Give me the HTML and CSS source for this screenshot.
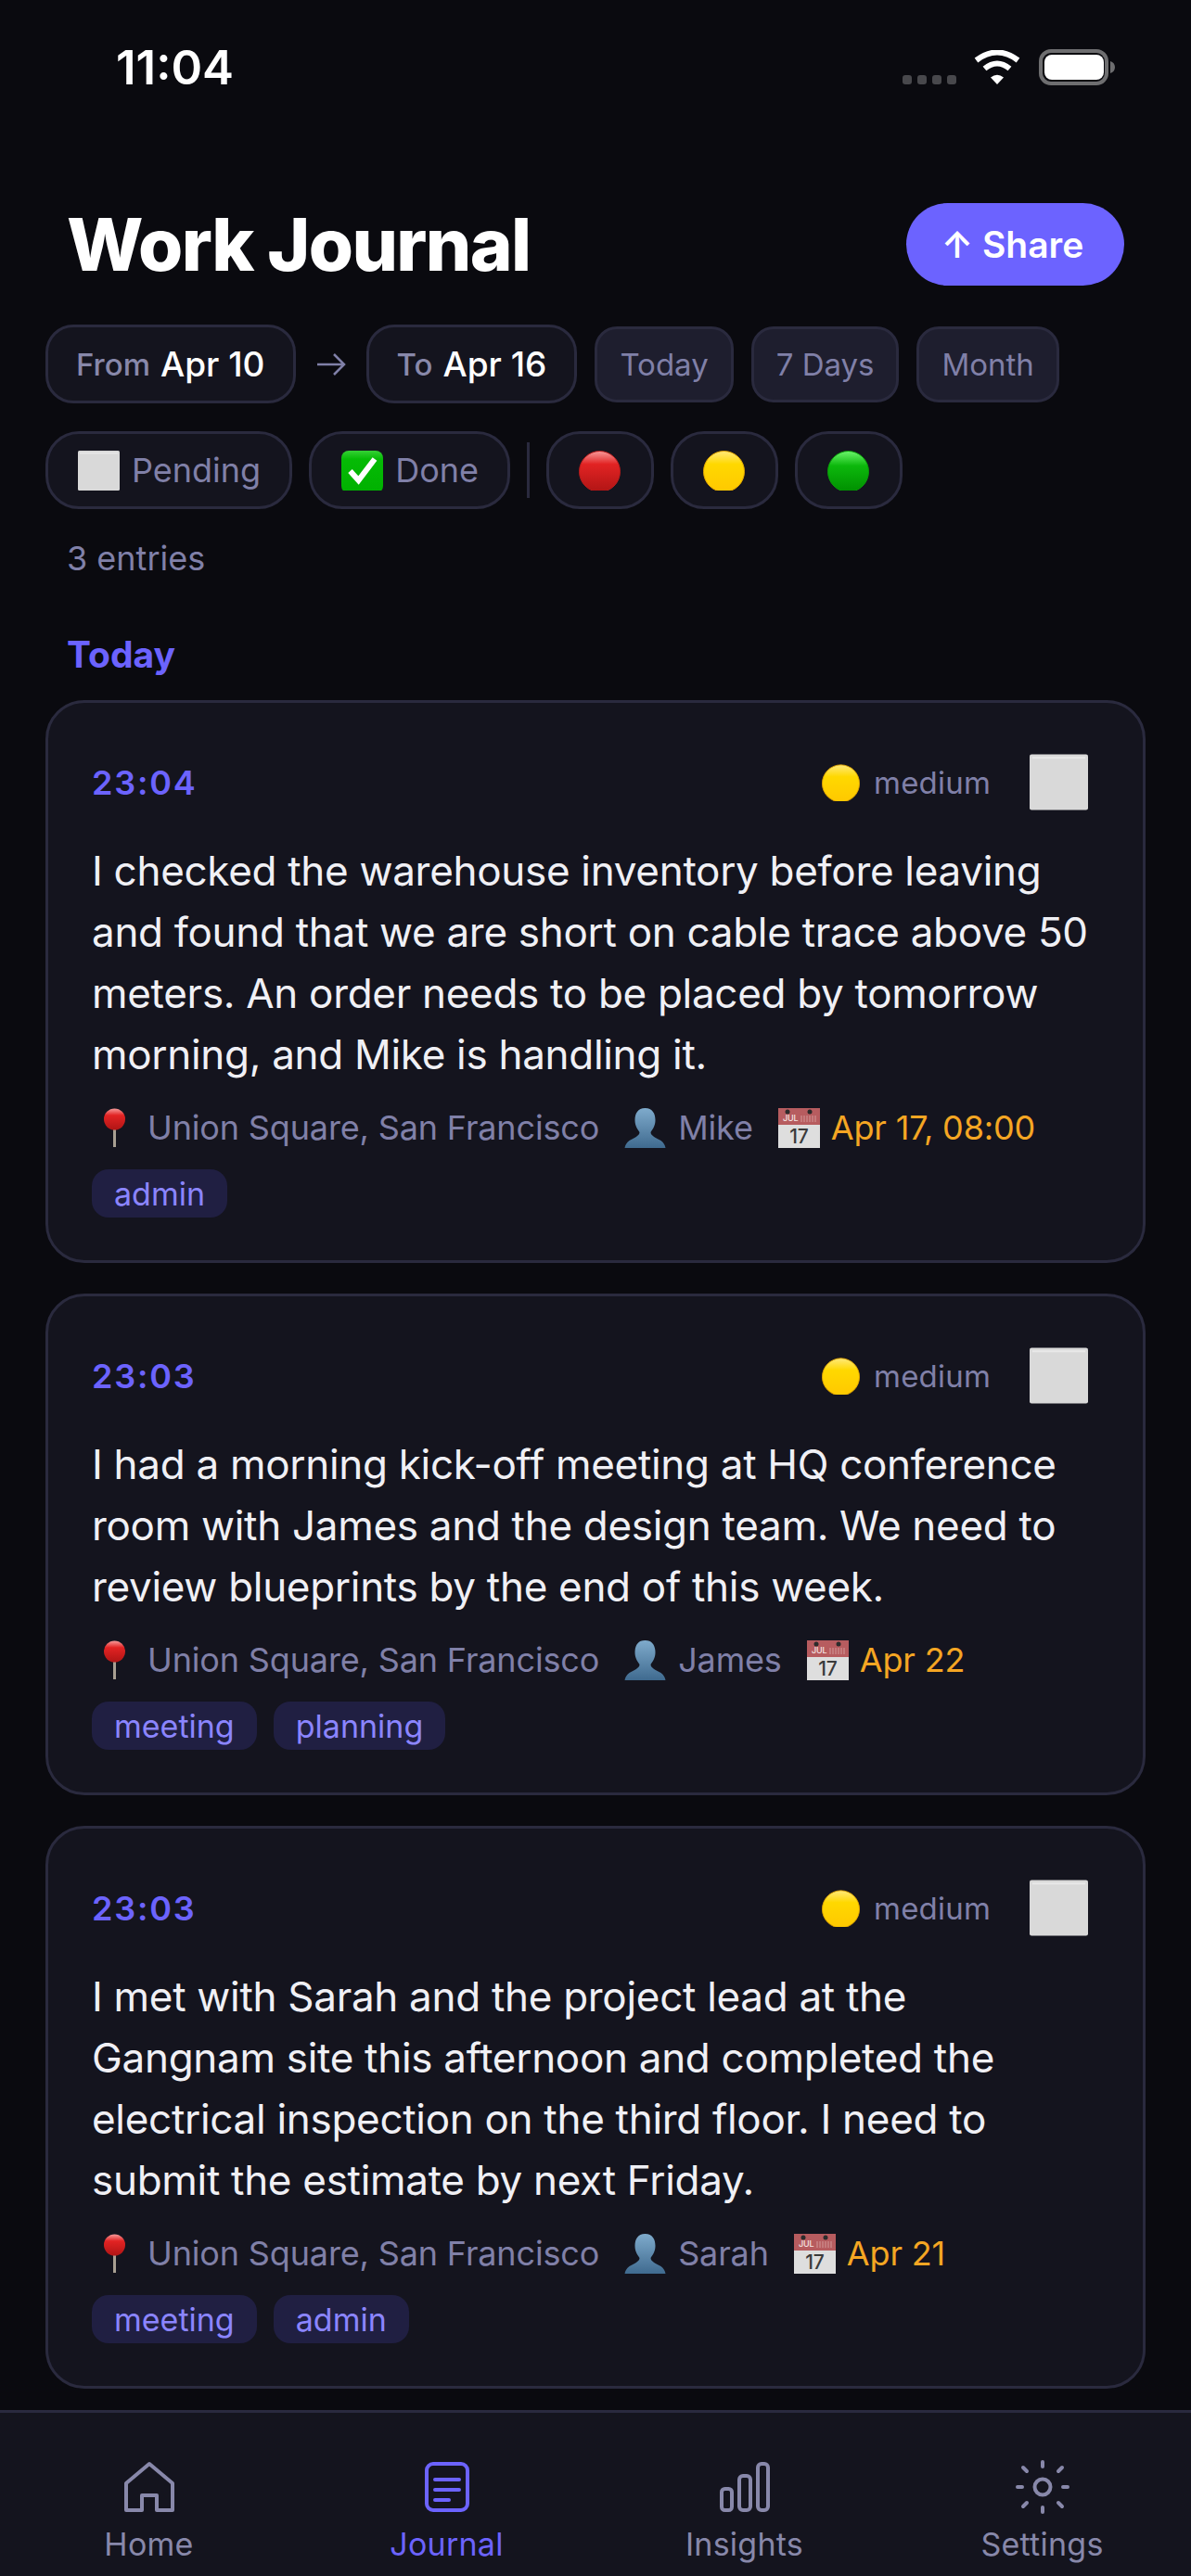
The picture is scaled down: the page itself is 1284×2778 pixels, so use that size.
FILE: index.html
```html
<!DOCTYPE html>
<html lang="en">
<head>
    <meta charset="UTF-8">
    <meta name="viewport" content="width=device-width, initial-scale=1.0">
    <title>Work Journal</title>
    <link rel="stylesheet" href="styles.css">
</head>
<body>

    <!-- emoji drawn once, reused below -->
    <svg class="sprite" aria-hidden="true">
        <defs>
            <linearGradient id="red-ball" x1="0" y1="0" x2="0" y2="1">
                <stop offset="0" stop-color="#f79a9a"/>
                <stop offset="0.32" stop-color="#e22323"/>
                <stop offset="1" stop-color="#b01515"/>
            </linearGradient>
            <linearGradient id="yellow-ball" x1="0" y1="0" x2="0" y2="1">
                <stop offset="0" stop-color="#ffe97a"/>
                <stop offset="0.32" stop-color="#ffd800"/>
                <stop offset="1" stop-color="#ffc800"/>
            </linearGradient>
            <linearGradient id="green-ball" x1="0" y1="0" x2="0" y2="1">
                <stop offset="0" stop-color="#6cf56c"/>
                <stop offset="0.36" stop-color="#0cb80c"/>
                <stop offset="1" stop-color="#008f00"/>
            </linearGradient>
            <linearGradient id="person-fill" x1="0" y1="0" x2="0" y2="1">
                <stop offset="0" stop-color="#7fabcc"/>
                <stop offset="1" stop-color="#3f6a8f"/>
            </linearGradient>
            <linearGradient id="check-fill" x1="0" y1="0" x2="0" y2="1">
                <stop offset="0" stop-color="#35d035"/>
                <stop offset="0.2" stop-color="#05bb05"/>
                <stop offset="1" stop-color="#00b000"/>
            </linearGradient>
        </defs>
        <symbol id="e-red" viewBox="0 0 45 43">
            <circle cx="22.5" cy="22.5" r="22" fill="url(#red-ball)" stroke="#b81c1c"/>
        </symbol>
        <symbol id="e-yellow" viewBox="0 0 45 43">
            <circle cx="22.5" cy="22.5" r="22" fill="url(#yellow-ball)" stroke="#e0a400"/>
        </symbol>
        <symbol id="e-green" viewBox="0 0 45 43">
            <circle cx="22.5" cy="22.5" r="22" fill="url(#green-ball)" stroke="#0a9a0a"/>
        </symbol>
        <symbol id="e-square" viewBox="0 0 45 43">
            <rect width="45" height="43" rx="1.5" fill="#d9d9d9"/>
            <rect x="2" y="2" width="41" height="1.5" fill="#e8e8e8"/>
        </symbol>
        <symbol id="e-check" viewBox="0 0 45 43">
            <rect width="45" height="46" rx="8" fill="url(#check-fill)"/>
            <path d="M9.5 22 L18.5 32 L36 9" fill="none" stroke="#fff" stroke-width="6"/>
        </symbol>
        <symbol id="e-pin" viewBox="0 0 47 43">
            <rect x="23" y="18" width="3" height="24" fill="#a89f92"/>
            <circle cx="24.5" cy="12" r="11.5" fill="url(#red-ball)"/>
        </symbol>
        <symbol id="e-person" viewBox="0 0 45 43">
            <path d="M22.5 0 C30.5 0 33.5 6 33.5 13 C33.5 19 30.5 23 28.5 26 C28.5 30 34.5 32 39.5 35 C42.5 37 44 40 44.5 43 H.5 C1 40 2.5 37 5.5 35 C10.5 32 16.5 30 16.5 26 C14.5 23 11.5 19 11.5 13 C11.5 6 14.5 0 22.5 0 Z" fill="url(#person-fill)"/>
        </symbol>
        <symbol id="e-calendar" viewBox="0 0 45 43">
            <rect width="45" height="43" fill="#dedede"/>
            <rect width="45" height="18" fill="#b75c5f"/>
            <path d="M25 8 V15 M28 8 V15 M31 8 V15 M34 8 V15 M37 8 V15 M40 8 V15" stroke="#cf8f90" stroke-width="1.2"/>
            <circle cx="10" cy="4" r="2.5" fill="#2b2b2b"/>
            <circle cx="34" cy="4" r="2.5" fill="#2b2b2b"/>
        </symbol>
    </svg>

    <div class="app">
        <div class="status-bar">
            <span class="status-time">11:04</span>
            <div class="status-icons">
                <div class="signal"><i></i><i></i><i></i><i></i></div>
                <svg class="wifi" width="50" height="37" viewBox="0 0 50 37">
                    <path d="M25 37 L18 29.5 Q25 24 32 29.5 Z" fill="#fff"/>
                    <path d="M11.5 20 Q25 9 38.5 20" fill="none" stroke="#fff" stroke-width="6"/>
                    <path d="M2.5 11 Q25 -6 47.5 11" fill="none" stroke="#fff" stroke-width="6"/>
                </svg>
                <svg class="battery" width="82" height="39" viewBox="0 0 82 39">
                    <rect x="2" y="2" width="71" height="35" rx="11" fill="none" stroke="#6e6e70" stroke-width="4"/>
                    <rect x="6" y="6" width="64" height="27" rx="8" fill="#fff"/>
                    <path d="M77 13 C80 14 82 16 82 19.5 C82 23 80 25 77 26 Z" fill="#6e6e70"/>
                </svg>
            </div>
        </div>

        <main class="main">
            <header class="page-header">
                <h1>Work Journal</h1>
                <button class="share-btn">↑ Share</button>
            </header>

            <div class="filter-row range-row">
                <div class="date-pill">From <strong>Apr 10</strong></div>
                <svg class="range-arrow" width="32" height="26" viewBox="0 0 32 26">
                    <path d="M1 13 H30 M19 2 L30 13 L19 24" fill="none" stroke="#8080a8" stroke-width="2.5"/>
                </svg>
                <div class="date-pill">To <strong>Apr 16</strong></div>
                <div class="quick-pill">Today</div>
                <div class="quick-pill">7 Days</div>
                <div class="quick-pill">Month</div>
            </div>

            <div class="filter-row status-row">
                <div class="filter-pill"><svg class="emoji"><use href="#e-square"/></svg>Pending</div>
                <div class="filter-pill"><svg class="emoji"><use href="#e-check"/></svg>Done</div>
                <span class="filter-divider"></span>
                <div class="filter-pill"><svg class="emoji"><use href="#e-red"/></svg></div>
                <div class="filter-pill"><svg class="emoji"><use href="#e-yellow"/></svg></div>
                <div class="filter-pill"><svg class="emoji"><use href="#e-green"/></svg></div>
            </div>

            <p class="entry-count">3 entries</p>
            <h2 class="day-label">Today</h2>

            <article class="card">
                <div class="card-head">
                    <span class="card-time">23:04</span>
                    <div class="card-priority"><svg class="emoji-sm"><use href="#e-yellow"/></svg>medium</div>
                    <svg class="card-check"><use href="#e-square"/></svg>
                </div>
                <p class="card-text">I checked the warehouse inventory before leaving and found that we are short on cable trace above 50 meters. An order needs to be placed by tomorrow morning, and Mike is handling it.</p>
                <div class="card-meta">
                    <span class="meta-item"><svg class="emoji-pin"><use href="#e-pin"/></svg>Union Square, San Francisco</span>
                    <span class="meta-item"><svg class="emoji-meta"><use href="#e-person"/></svg>Mike</span>
                    <span class="meta-item due">
                        <svg class="emoji-meta" viewBox="0 0 45 43"><use href="#e-calendar" width="45" height="43"/><text x="5" y="14" class="cal-month">JUL</text><text x="22.5" y="38" class="cal-day">17</text></svg>
                        Apr 17, 08:00
                    </span>
                </div>
                <div class="card-tags"><span class="tag">admin</span></div>
            </article>

            <article class="card">
                <div class="card-head">
                    <span class="card-time">23:03</span>
                    <div class="card-priority"><svg class="emoji-sm"><use href="#e-yellow"/></svg>medium</div>
                    <svg class="card-check"><use href="#e-square"/></svg>
                </div>
                <p class="card-text">I had a morning kick-off meeting at HQ conference room with James and the design team. We need to review blueprints by the end of this week.</p>
                <div class="card-meta">
                    <span class="meta-item"><svg class="emoji-pin"><use href="#e-pin"/></svg>Union Square, San Francisco</span>
                    <span class="meta-item"><svg class="emoji-meta"><use href="#e-person"/></svg>James</span>
                    <span class="meta-item due">
                        <svg class="emoji-meta" viewBox="0 0 45 43"><use href="#e-calendar" width="45" height="43"/><text x="5" y="14" class="cal-month">JUL</text><text x="22.5" y="38" class="cal-day">17</text></svg>
                        Apr 22
                    </span>
                </div>
                <div class="card-tags"><span class="tag">meeting</span><span class="tag">planning</span></div>
            </article>

            <article class="card">
                <div class="card-head">
                    <span class="card-time">23:03</span>
                    <div class="card-priority"><svg class="emoji-sm"><use href="#e-yellow"/></svg>medium</div>
                    <svg class="card-check"><use href="#e-square"/></svg>
                </div>
                <p class="card-text">I met with Sarah and the project lead at the Gangnam site this afternoon and completed the electrical inspection on the third floor. I need to submit the estimate by next Friday.</p>
                <div class="card-meta">
                    <span class="meta-item"><svg class="emoji-pin"><use href="#e-pin"/></svg>Union Square, San Francisco</span>
                    <span class="meta-item"><svg class="emoji-meta"><use href="#e-person"/></svg>Sarah</span>
                    <span class="meta-item due">
                        <svg class="emoji-meta" viewBox="0 0 45 43"><use href="#e-calendar" width="45" height="43"/><text x="5" y="14" class="cal-month">JUL</text><text x="22.5" y="38" class="cal-day">17</text></svg>
                        Apr 21
                    </span>
                </div>
                <div class="card-tags"><span class="tag">meeting</span><span class="tag">admin</span></div>
            </article>
        </main>

        <nav class="tab-bar">
            <div class="tab">
                <svg class="tab-icon" viewBox="0 0 72 72">
                    <path d="M36 11 L61 32 V61 H44 V45 H28 V61 H11 V32 Z"/>
                </svg>
                <span>Home</span>
            </div>
            <div class="tab active">
                <svg class="tab-icon" viewBox="0 0 72 72">
                    <rect x="14" y="11" width="44" height="50" rx="7"/>
                    <path d="M23 28 H49 M23 39 H49 M23 50 H38"/>
                </svg>
                <span>Journal</span>
            </div>
            <div class="tab">
                <svg class="tab-icon" viewBox="0 0 72 72">
                    <rect x="11" y="38" width="11" height="23" rx="3.5"/>
                    <rect x="30" y="24" width="12" height="37" rx="4"/>
                    <rect x="50" y="11" width="11" height="50" rx="4"/>
                </svg>
                <span>Insights</span>
            </div>
            <div class="tab">
                <svg class="tab-icon" viewBox="0 0 72 72">
                    <circle cx="36" cy="36" r="8.5"/>
                    <path d="M36 9 V14 M36 58 V63 M9 36 H14 M58 36 H63 M15 15 L19 19 M53 53 L57 57 M57 15 L53 19 M19 53 L15 57"/>
                </svg>
                <span>Settings</span>
            </div>
        </nav>
    </div>

</body>
</html>
```

FILE: styles.css
```css
* {
    box-sizing: border-box;
}

body {
    font-family: 'Inter', sans-serif;
    margin: 0;
    background-color: #0a0a0f;
    color: #f0f0f5;
}

.sprite {
    position: absolute;
    width: 0;
    height: 0;
}

.cal-month {
    font-family: 'Inter', sans-serif;
    font-size: 9px;
    font-weight: 500;
    fill: #f5e6e6;
}

.cal-day {
    font-family: 'Inter', sans-serif;
    font-size: 21px;
    font-weight: 500;
    fill: #3a3a3a;
    text-anchor: middle;
}

.app {
    width: 1284px;
    height: 2778px;
    display: flex;
    flex-direction: column;
    overflow: hidden;
}

/* status bar */
.status-bar {
    height: 125px;
    padding: 43px 82px 0 125px;
    display: flex;
    justify-content: space-between;
    align-items: flex-start;
}

.status-time {
    font-size: 51px;
    line-height: 60px;
    font-weight: 600;
    color: #fff;
}

.status-icons {
    display: flex;
    align-items: flex-start;
    margin-top: 10px;
}

.signal {
    display: flex;
    gap: 6px;
    margin-top: 28px;
    margin-right: 19px;
}

.signal i {
    width: 10px;
    height: 10px;
    border-radius: 3px;
    background-color: #48484c;
}

.wifi {
    margin-top: 1px;
    margin-right: 20px;
}

/* header and filters */
.main {
    flex: 1;
    padding: 0 49px;
}

.page-header {
    display: flex;
    justify-content: space-between;
    align-items: center;
    padding: 94px 23px 0 23px;
}

.page-header h1 {
    margin: 0;
    font-size: 78px;
    line-height: 89px;
    font-weight: 800;
    letter-spacing: -1.6px;
    color: #fff;
}

.share-btn {
    height: 89px;
    width: 235px;
    padding: 0 6px 0 0;
    border: none;
    border-radius: 45px;
    background-color: #6c63ff;
    color: white;
    font-family: inherit;
    font-size: 39px;
    font-weight: 600;
}

.filter-row {
    display: flex;
    align-items: center;
}

.range-row {
    gap: 19px;
    margin-top: 42px;
}

.status-row {
    gap: 18px;
    margin-top: 30px;
}

.date-pill {
    height: 85px;
    padding: 0 30px;
    display: flex;
    align-items: center;
    gap: 11px;
    border: 3px solid #2a2a3e;
    border-radius: 30px;
    background-color: #14141e;
    color: #8888aa;
    font-size: 33px;
    font-weight: 500;
}

.date-pill strong {
    color: #fff;
    font-size: 37px;
    font-weight: 500;
}

.range-arrow {
    margin: 0 3px;
}

.quick-pill {
    height: 82px;
    padding: 0 24px;
    display: flex;
    align-items: center;
    border: 3px solid #2a2a3e;
    border-radius: 24px;
    background-color: #1e1e2e;
    color: #8080a8;
    font-size: 33px;
}

.filter-pill {
    height: 84px;
    min-width: 116px;
    padding: 0 31px 0 32px;
    display: flex;
    align-items: center;
    gap: 13px;
    border: 3px solid #2a2a3e;
    border-radius: 36px;
    background-color: #14141e;
    color: #8080a8;
    font-size: 36px;
}

.filter-divider {
    width: 3px;
    height: 60px;
    background-color: #2a2a3e;
}

.emoji {
    width: 45px;
    height: 43px;
}

.entry-count {
    margin: 31px 0 0 23px;
    font-size: 36px;
    line-height: 44px;
    color: #8080a8;
}

.day-label {
    margin: 58px 0 0 23px;
    font-size: 39px;
    line-height: 48px;
    font-weight: 700;
    color: #6c63ff;
}

/* entries */
.card {
    margin-top: 25px;
    padding: 54px 48px 46px 47px;
    border: 3px solid #2a2a3e;
    border-radius: 42px;
    background-color: #14141e;
}

.card + .card {
    margin-top: 33px;
}

.card-head {
    display: flex;
    align-items: center;
}

.card-time {
    flex: 1;
    font-size: 36px;
    font-weight: 600;
    letter-spacing: 1.8px;
    color: #6c63ff;
}

.card-priority {
    display: flex;
    align-items: center;
    gap: 15px;
    font-size: 33px;
    letter-spacing: 0.2px;
    color: #8080a8;
}

.emoji-sm {
    width: 41px;
    height: 40px;
}

.card-check {
    width: 63px;
    height: 63px;
    margin: 0 11px 0 42px;
}

.card-text {
    margin: 31px 8px 0 0;
    font-size: 44px;
    line-height: 66px;
    letter-spacing: -0.3px;
}

.card-meta {
    display: flex;
    align-items: center;
    gap: 27px;
    margin-top: 24px;
    font-size: 36px;
    letter-spacing: -0.15px;
    color: #8080a8;
}

.meta-item {
    display: flex;
    align-items: center;
    gap: 13px;
    white-space: nowrap;
}

.due {
    gap: 12px;
    color: #f5a623;
}

.emoji-pin {
    width: 47px;
    height: 43px;
}

.emoji-meta {
    width: 45px;
    height: 43px;
}

.card-tags {
    display: flex;
    gap: 18px;
    margin-top: 23px;
}

.tag {
    height: 52px;
    padding: 0 24px;
    display: flex;
    align-items: center;
    border-radius: 18px;
    background-color: #201f42;
    color: #8b85ff;
    font-size: 34px;
}

/* tab bar */
.tab-bar {
    height: 179px;
    padding-top: 44px;
    display: flex;
    border-top: 3px solid #2a2a3e;
    background-color: #14141e;
}

.tab {
    flex: 1;
    display: flex;
    flex-direction: column;
    align-items: center;
    color: #8888aa;
    font-size: 34px;
    letter-spacing: 0.25px;
}

.tab span {
    margin-top: 5px;
}

.tab.active {
    color: #6c63ff;
}

.tab-icon {
    width: 72px;
    height: 72px;
    fill: none;
    stroke: currentColor;
    stroke-width: 4;
    stroke-linecap: round;
    stroke-linejoin: round;
}
```
